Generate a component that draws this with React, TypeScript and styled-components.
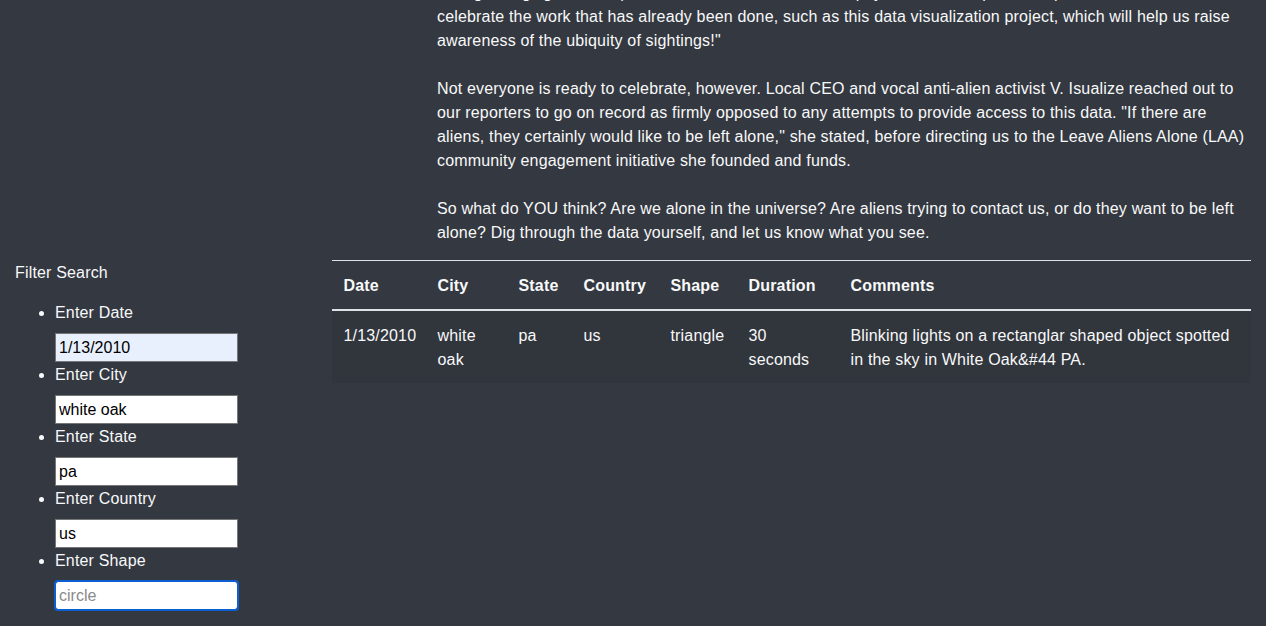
import React from "react";
import styled, { createGlobalStyle } from "styled-components";

const GlobalStyle = createGlobalStyle`
  html, body {
    margin: 0;
    padding: 0;
    background: #343840;
  }
  body {
    color: #f8f9fa;
    font-family: "Liberation Sans", Arial, Helvetica, sans-serif;
    font-size: 16px;
    line-height: 1.5;
    letter-spacing: 0.17px;
    overflow: hidden;
  }
  * { box-sizing: border-box; }
`;

const Page = styled.div`
  width: 1266px;
  margin-top: -19px;
`;

const ArticleRow = styled.section`
  padding: 0 16px 0 437px;
`;

const Article = styled.p`
  margin: 0 0 15px;
  max-width: 810px;
`;

const Row = styled.div`
  display: grid;
  grid-template-columns: 25% 75%;
`;

const Col = styled.div`
  padding: 0 15px;
`;

const FilterTitle = styled.div`
  padding-top: 1px;
  margin-bottom: 16px;
`;

const FilterList = styled.ul`
  margin: 0 0 16px;
  padding-left: 40px;
`;

const FilterItem = styled.li`
  margin: 0;
`;

const Label = styled.label`
  display: block;
  margin-bottom: 8px;
`;

const Input = styled.input<{ $autofill?: boolean; $focused?: boolean }>`
  display: block;
  width: 183px;
  height: 29px;
  margin-bottom: 1px;
  padding: 1px 3px;
  border: 1px solid #767676;
  border-radius: ${(p) => (p.$focused ? "3px" : "0")};
  background: ${(p) => (p.$autofill ? "#e8f0fe" : "#ffffff")};
  color: #000;
  font-family: Arial, "Liberation Sans", sans-serif;
  font-size: 16px;
  letter-spacing: normal;
  outline: ${(p) => (p.$focused ? "2px solid #0b5fd0" : "none")};
  outline-offset: -1px;
  &::placeholder {
    color: #8a8a8a;
  }
`;

const Table = styled.table`
  width: 100%;
  border-collapse: collapse;
  table-layout: fixed;
  color: #f8f9fa;
`;

const Th = styled.th<{ $w?: number }>`
  width: ${(p) => (p.$w ? `${p.$w}px` : "auto")};
  padding: 13px 12px 11px;
  text-align: left;
  font-weight: 700;
  vertical-align: bottom;
  border-top: 1px solid #dee2e6;
  border-bottom: 2px solid #dee2e6;
`;

const BodyRow = styled.tr`
  background: rgba(0, 0, 0, 0.05);
`;

const Td = styled.td`
  padding: 13px 12px 11px;
  vertical-align: top;
`;

const columns: [string, number | undefined][] = [
  ["Date", 94],
  ["City", 81],
  ["State", 65],
  ["Country", 87],
  ["Shape", 78],
  ["Duration", 102],
  ["Comments", undefined],
];

const rows = [
  [
    "1/13/2010",
    "white oak",
    "pa",
    "us",
    "triangle",
    "30 seconds",
    "Blinking lights on a rectanglar shaped object spotted in the sky in White Oak&#44 PA.",
  ],
];

const filters = [
  { id: "datetime", label: "Enter Date", value: "1/13/2010", autofill: true },
  { id: "city", label: "Enter City", value: "white oak" },
  { id: "state", label: "Enter State", value: "pa" },
  { id: "country", label: "Enter Country", value: "us" },
  { id: "shape", label: "Enter Shape", value: "", placeholder: "circle", focused: true },
];

export default function App() {
  return (
    <>
      <GlobalStyle />
      <Page>
        <ArticleRow>
          <Article>
            their growing light on the phenomenon, and we should all pay a moment to pause, hope, and then
            <br />
            celebrate the work that has already been done, such as this data visualization project, which will help us raise
            awareness of the ubiquity of sightings!"
            <br />
            <br />
            Not everyone is ready to celebrate, however. Local CEO and vocal anti-alien activist V. Isualize reached out to
            our reporters to go on record as firmly opposed to any attempts to provide access to this data. "If there are
            aliens, they certainly would like to be left alone," she stated, before directing us to the Leave Aliens Alone (LAA)
            community engagement initiative she founded and funds.
            <br />
            <br />
            So what do YOU think? Are we alone in the universe? Are aliens trying to contact us, or do they want to be left
            alone? Dig through the data yourself, and let us know what you see.
          </Article>
        </ArticleRow>
        <Row>
          <Col>
            <form onSubmit={(e) => e.preventDefault()}>
              <FilterTitle>Filter Search</FilterTitle>
              <FilterList>
                {filters.map((f) => (
                  <FilterItem key={f.id}>
                    <Label htmlFor={f.id}>{f.label}</Label>
                    <Input
                      id={f.id}
                      type="text"
                      defaultValue={f.value}
                      placeholder={f.placeholder}
                      $autofill={f.autofill}
                      $focused={f.focused}
                    />
                  </FilterItem>
                ))}
              </FilterList>
            </form>
          </Col>
          <Col>
            <Table>
              <thead>
                <tr>
                  {columns.map(([name, w]) => (
                    <Th key={name} $w={w}>
                      {name}
                    </Th>
                  ))}
                </tr>
              </thead>
              <tbody>
                {rows.map((r, i) => (
                  <BodyRow key={i}>
                    {r.map((c, j) => (
                      <Td key={j}>{c}</Td>
                    ))}
                  </BodyRow>
                ))}
              </tbody>
            </Table>
          </Col>
        </Row>
      </Page>
    </>
  );
}
